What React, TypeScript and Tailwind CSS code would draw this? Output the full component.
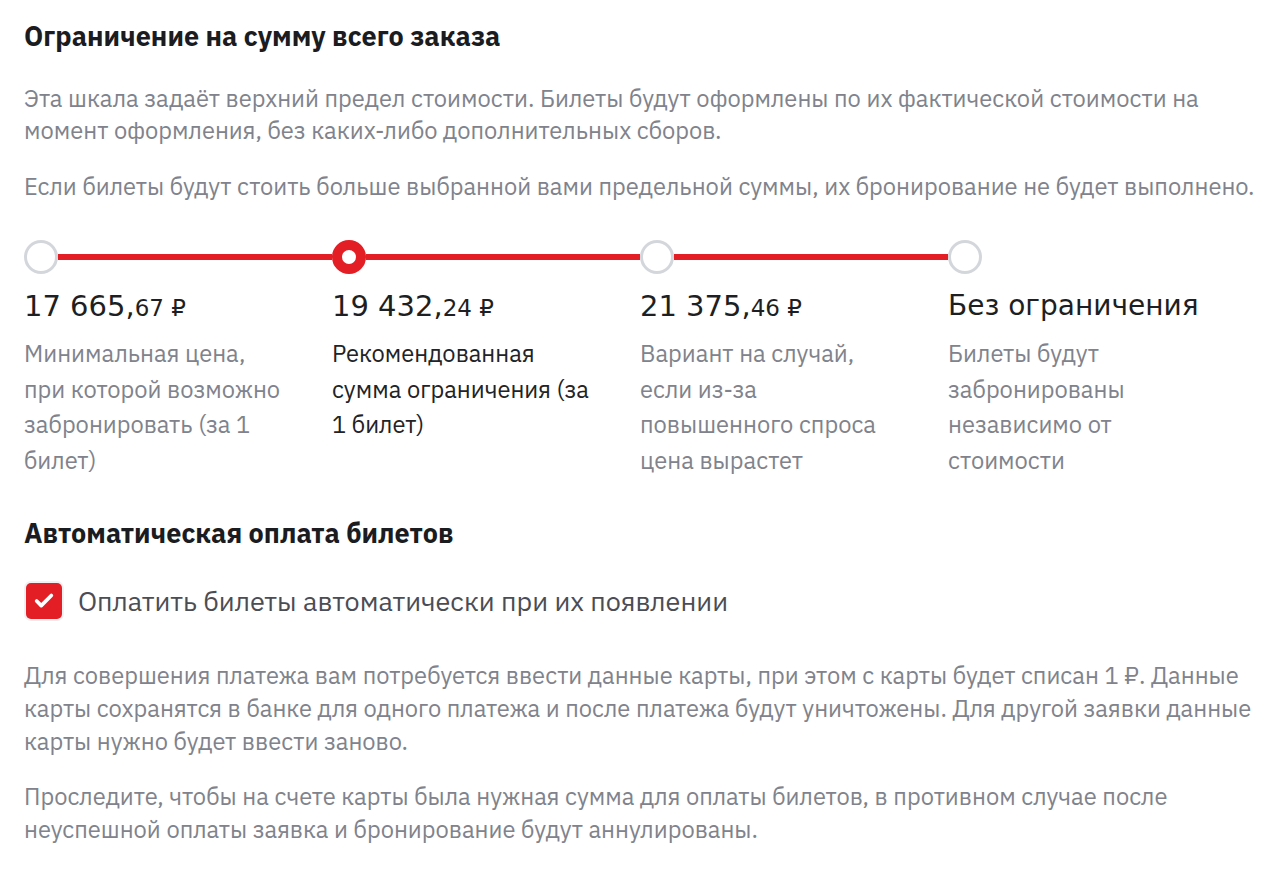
import { Check } from 'lucide-react'

const steps = [
  {
    whole: '17 665,',
    cents: '67',
    text: 'Минимальная цена, при которой возможно забронировать (за 1 билет)',
    active: false,
  },
  {
    whole: '19 432,',
    cents: '24',
    text: 'Рекомендованная сумма ограничения (за 1 билет)',
    active: true,
  },
  {
    whole: '21 375,',
    cents: '46',
    text: 'Вариант на случай, если из-за повышенного спроса цена вырастет',
    active: false,
  },
  {
    whole: '',
    cents: '',
    text: 'Билеты будут забронированы независимо от стоимости',
    active: false,
  },
]

function App() {
  return (
    <div className="min-h-screen bg-white px-6 pt-5 font-['IBM_Plex_Sans','Noto_Sans',sans-serif]">
      {/* Price limit */}
      <h2 className="text-[27px] leading-8 font-bold text-[#1b1c1f]">Ограничение на сумму всего заказа</h2>

      <p className="mt-[31px] text-[23.7px] leading-8 text-[#80838c]">
        Эта шкала задаёт верхний предел стоимости. Билеты будут оформлены по их фактической стоимости на
        момент оформления, без каких-либо дополнительных сборов.
      </p>
      <p className="mt-6 text-[23.7px] leading-8 text-[#80838c]">
        Если билеты будут стоить больше выбранной вами предельной суммы, их бронирование не будет выполнено.
      </p>

      <div className="mt-[37px] grid grid-cols-[308px_308px_308px_308px]">
        {steps.map((s, i) => (
          <div key={i}>
            <div className="flex items-center">
              {s.active ? (
                <div className="h-[34px] w-[34px] shrink-0 rounded-full border-[10px] border-[#e31e24] bg-white" />
              ) : (
                <div className="h-[34px] w-[34px] shrink-0 rounded-full border-[3px] border-[#d3d6db] bg-white" />
              )}
              {i < 3 && <div className="h-[6px] flex-1 bg-[#e31e24]" />}
            </div>
            <div className="mt-[14px] h-9 font-['DejaVu_Sans',sans-serif] leading-9 text-[#1e1f22]">
              {s.whole ? (
                <span>
                  <span className="text-[29px]">{s.whole}</span>
                  <span className="text-[23px]">{s.cents} ₽</span>
                </span>
              ) : (
                <span className="text-[28px]">Без ограничения</span>
              )}
            </div>
            <p
              className={`mt-3 w-[262px] text-[23.7px] leading-[35.5px] ${
                s.active ? 'text-[#222327]' : 'text-[#80838c]'
              }`}
            >
              {s.text}
            </p>
          </div>
        ))}
      </div>

      {/* Auto payment */}
      <h2 className="mt-[39px] text-[27px] leading-8 font-bold text-[#1b1c1f]">Автоматическая оплата билетов</h2>

      <label className="mt-[34px] flex items-center gap-4">
        <span className="ml-[2px] flex h-[36px] w-[36px] items-center justify-center rounded-[5px] bg-[#e31e24] ring-2 ring-[#f1f1f3]">
          <Check size={22} strokeWidth={4} className="text-white" />
        </span>
        <span className="text-[27px] leading-9 text-[#4b4d55]">Оплатить билеты автоматически при их появлении</span>
      </label>

      <p className="mt-10 text-[23.7px] leading-[33px] text-[#80838c]">
        Для совершения платежа вам потребуется ввести данные карты, при этом с карты будет списан 1 ₽. Данные
        карты сохранятся в банке для одного платежа и после платежа будут уничтожены. Для другой заявки данные
        карты нужно будет ввести заново.
      </p>
      <p className="mt-[22px] text-[23.7px] leading-[33px] text-[#80838c]">
        Проследите, чтобы на счете карты была нужная сумма для оплаты билетов, в противном случае после
        неуспешной оплаты заявка и бронирование будут аннулированы.
      </p>
    </div>
  )
}

export default App
